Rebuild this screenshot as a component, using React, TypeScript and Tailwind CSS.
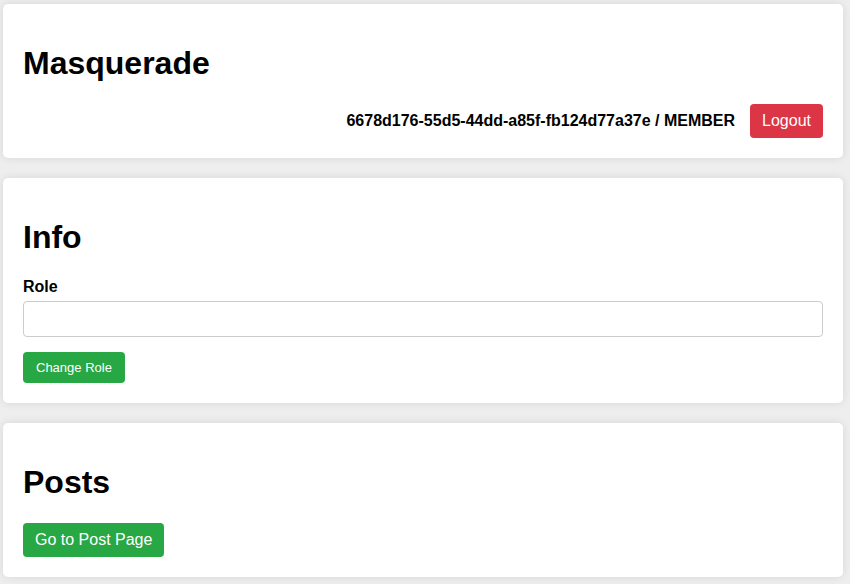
import type { ReactNode } from "react";

function Card({ title, children }: { title: string; children: ReactNode }) {
  return (
    <section className="rounded-[5px] bg-white p-5 shadow-[0_0_10px_rgba(0,0,0,0.1)]">
      <h1 className="mt-5 mb-[22px] text-[32px] leading-[38px] font-bold">{title}</h1>
      {children}
    </section>
  );
}

export default function App() {
  return (
    <main className="flex min-h-screen flex-col gap-5 bg-[#eeeeee] pt-1 pr-[7px] pb-[7px] pl-[3px] font-['Liberation_Sans',Arial,sans-serif] text-base text-black">
      <Card title="Masquerade">
        <div className="flex items-center justify-end gap-[15px]">
          <strong className="leading-[18px]">6678d176-55d5-44dd-a85f-fb124d77a37e / MEMBER</strong>
          <a href="#logout" className="rounded-[4px] bg-[#dc3545] px-3 py-2 leading-[18px] text-white">
            Logout
          </a>
        </div>
      </Card>
      <Card title="Info">
        <form onSubmit={(event) => event.preventDefault()}>
          <label htmlFor="role" className="mb-[5px] block leading-[18px] font-bold">
            Role
          </label>
          <input
            id="role"
            name="role"
            type="text"
            className="mb-[15px] block h-9 w-full rounded-[4px] border border-[#cccccc] bg-white px-2"
          />
          <button type="submit" className="block rounded-[4px] bg-[#28a745] px-[13px] py-2 text-[13px] leading-[15px] text-white">
            Change Role
          </button>
        </form>
      </Card>
      <Card title="Posts">
        <a href="#posts" className="inline-block rounded-[4px] bg-[#28a745] px-3 py-2 align-top leading-[18px] text-white">
          Go to Post Page
        </a>
      </Card>
    </main>
  );
}
